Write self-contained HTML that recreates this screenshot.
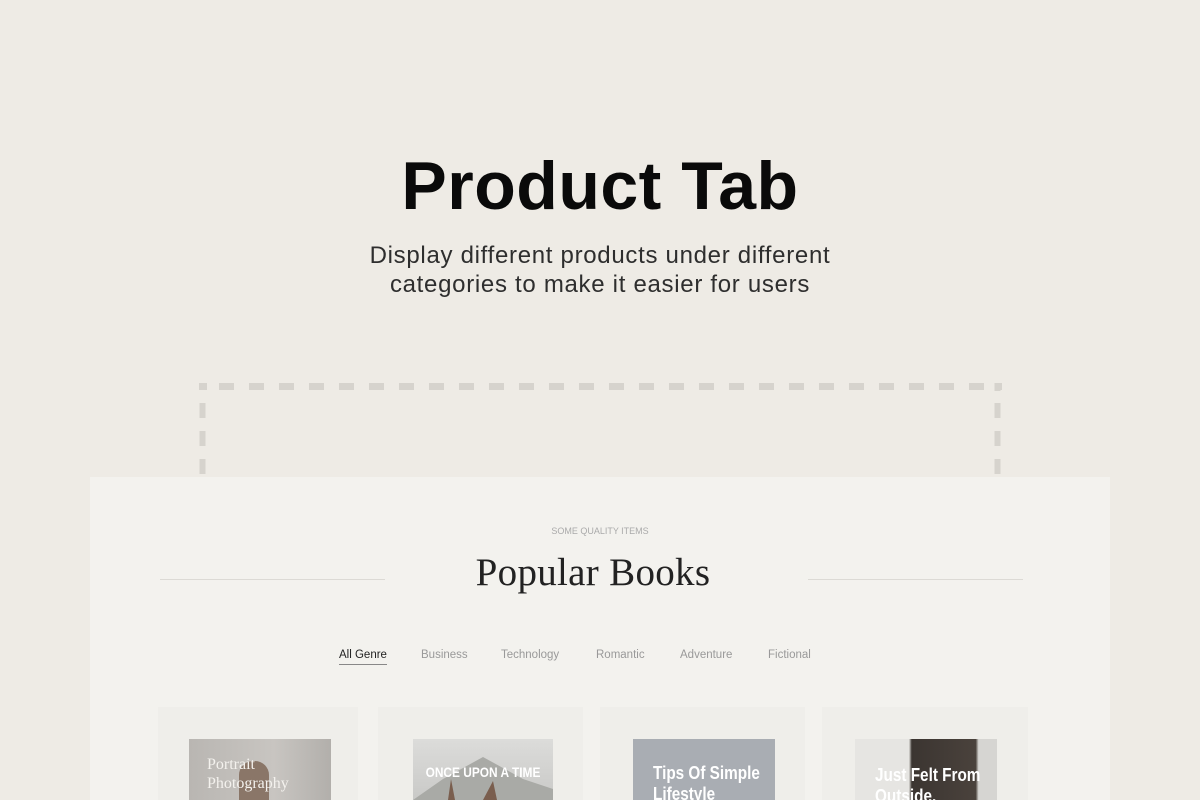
<!DOCTYPE html>
<html><head><meta charset="utf-8"><style>
*{margin:0;padding:0;box-sizing:border-box}
body{width:1200px;height:800px;overflow:hidden;background:#eeebe5;font-family:"Liberation Sans",sans-serif;position:relative}
.abs{position:absolute}
h1{position:absolute;left:0;width:1200px;top:146px;text-align:center;font-size:68px;font-weight:bold;color:#0a0a0a;letter-spacing:0.5px;line-height:80px}
.sub{position:absolute;left:0;width:1200px;top:241px;text-align:center;font-size:24px;line-height:29px;color:#2e2e2e;letter-spacing:0.7px}
.panel{position:absolute;left:90px;top:477px;width:1020px;height:323px;background:#f3f2ee}
.tabs span{position:absolute;top:649px;font-size:11.5px;color:#999}
.card{position:absolute;top:707px;height:93px;background:#efeeea}
.cover{position:absolute;top:739px;height:61px;overflow:hidden;color:#fff}
.cover div{white-space:nowrap}
</style></head><body>
<h1>Product Tab</h1>
<div class="sub">Display different products under different<br>categories to make it easier for users</div>
<svg class="abs" style="left:0;top:0" width="1200" height="800">
<line x1="199" y1="386.5" x2="1002" y2="386.5" stroke="#d6d3cd" stroke-width="7" stroke-dasharray="8 12 15 15 15 15 15 15 15 15 15 15 15 15 15 15 15 15 15 15 15 15 15 15 15 15 15 15 15 15 15 15 15 15 15 15 15 15 15 15 15 15 15 15 15 15 15 15 15 15 15 15 15 15 15 15 15 15 15 15 15 15 15 15"/>
<line x1="202.5" y1="403" x2="202.5" y2="478" stroke="#d6d3cd" stroke-width="6" stroke-dasharray="15 13"/>
<line x1="997.5" y1="383" x2="997.5" y2="478" stroke="#d6d3cd" stroke-width="6" stroke-dasharray="8 12 15 13 15 13 15 13"/>
</svg>
<div class="panel"></div>
<div class="abs" style="left:0;width:1200px;top:526px;text-align:center;font-size:9px;color:#aaa">SOME QUALITY ITEMS</div>
<div class="abs" style="left:0;width:1186px;top:550px;text-align:center;font-family:'Liberation Serif',serif;font-size:39px;color:#222;letter-spacing:0.3px">Popular Books</div>
<div class="abs" style="left:160px;top:579px;width:225px;height:1px;background:#dcdad5"></div>
<div class="abs" style="left:808px;top:579px;width:215px;height:1px;background:#dcdad5"></div>
<div class="tabs">
<span style="left:339px;color:#222">All Genre</span>
<span style="left:421px">Business</span>
<span style="left:501px">Technology</span>
<span style="left:596px">Romantic</span>
<span style="left:680px">Adventure</span>
<span style="left:768px">Fictional</span>
</div>
<div class="abs" style="left:339px;top:664px;width:48px;height:1px;background:#888"></div>
<div class="card" style="left:158px;width:200px"></div>
<div class="card" style="left:378px;width:205px"></div>
<div class="card" style="left:600px;width:205px"></div>
<div class="card" style="left:822px;width:206px"></div>
<div class="cover" style="left:189px;width:142px;background:linear-gradient(90deg,#b9b6b2,#c8c5c1 60%,#b2afab)">
<div style="position:absolute;left:50px;top:22px;width:30px;height:45px;border-radius:14px 14px 0 0;background:#8a7668"></div>
<div style="position:absolute;left:18px;top:16px;font-family:'Liberation Serif',serif;font-size:16px;line-height:19px;color:#f4f2ee">Portrait<br>Photography</div></div>
<div class="cover" style="left:413px;width:140px;background:linear-gradient(#dcdcda,#c9c9c7)">
<svg width="140" height="61" style="position:absolute;left:0;top:0"><polygon points="0,61 30,40 70,18 110,40 140,50 140,61" fill="#a9aaa6"/><path d="M35 61 L38 40 L42 61 Z M70 61 L80 42 L84 61Z" fill="#7a5e4e"/></svg>
<div style="position:absolute;left:0;width:140px;top:25px;text-align:center;font-weight:bold;font-size:14px;transform:scaleX(0.85)">ONCE UPON A TIME</div></div>
<div class="cover" style="left:633px;width:142px;background:#a9adb3">
<div style="position:absolute;left:20px;top:24px;font-weight:bold;font-size:18px;line-height:21px;transform:scaleX(0.85);transform-origin:0 0">Tips Of Simple<br>Lifestyle</div></div>
<div class="cover" style="left:855px;width:142px;background:linear-gradient(90deg,#e6e5e2 0,#e6e5e2 38%,#3b3531 40%,#4a423c 85%,#d6d5d2 87%)">
<div style="position:absolute;left:20px;top:26px;font-weight:bold;font-size:18px;line-height:21px;transform:scaleX(0.85);transform-origin:0 0">Just Felt From<br>Outside.</div></div>
</body></html>
